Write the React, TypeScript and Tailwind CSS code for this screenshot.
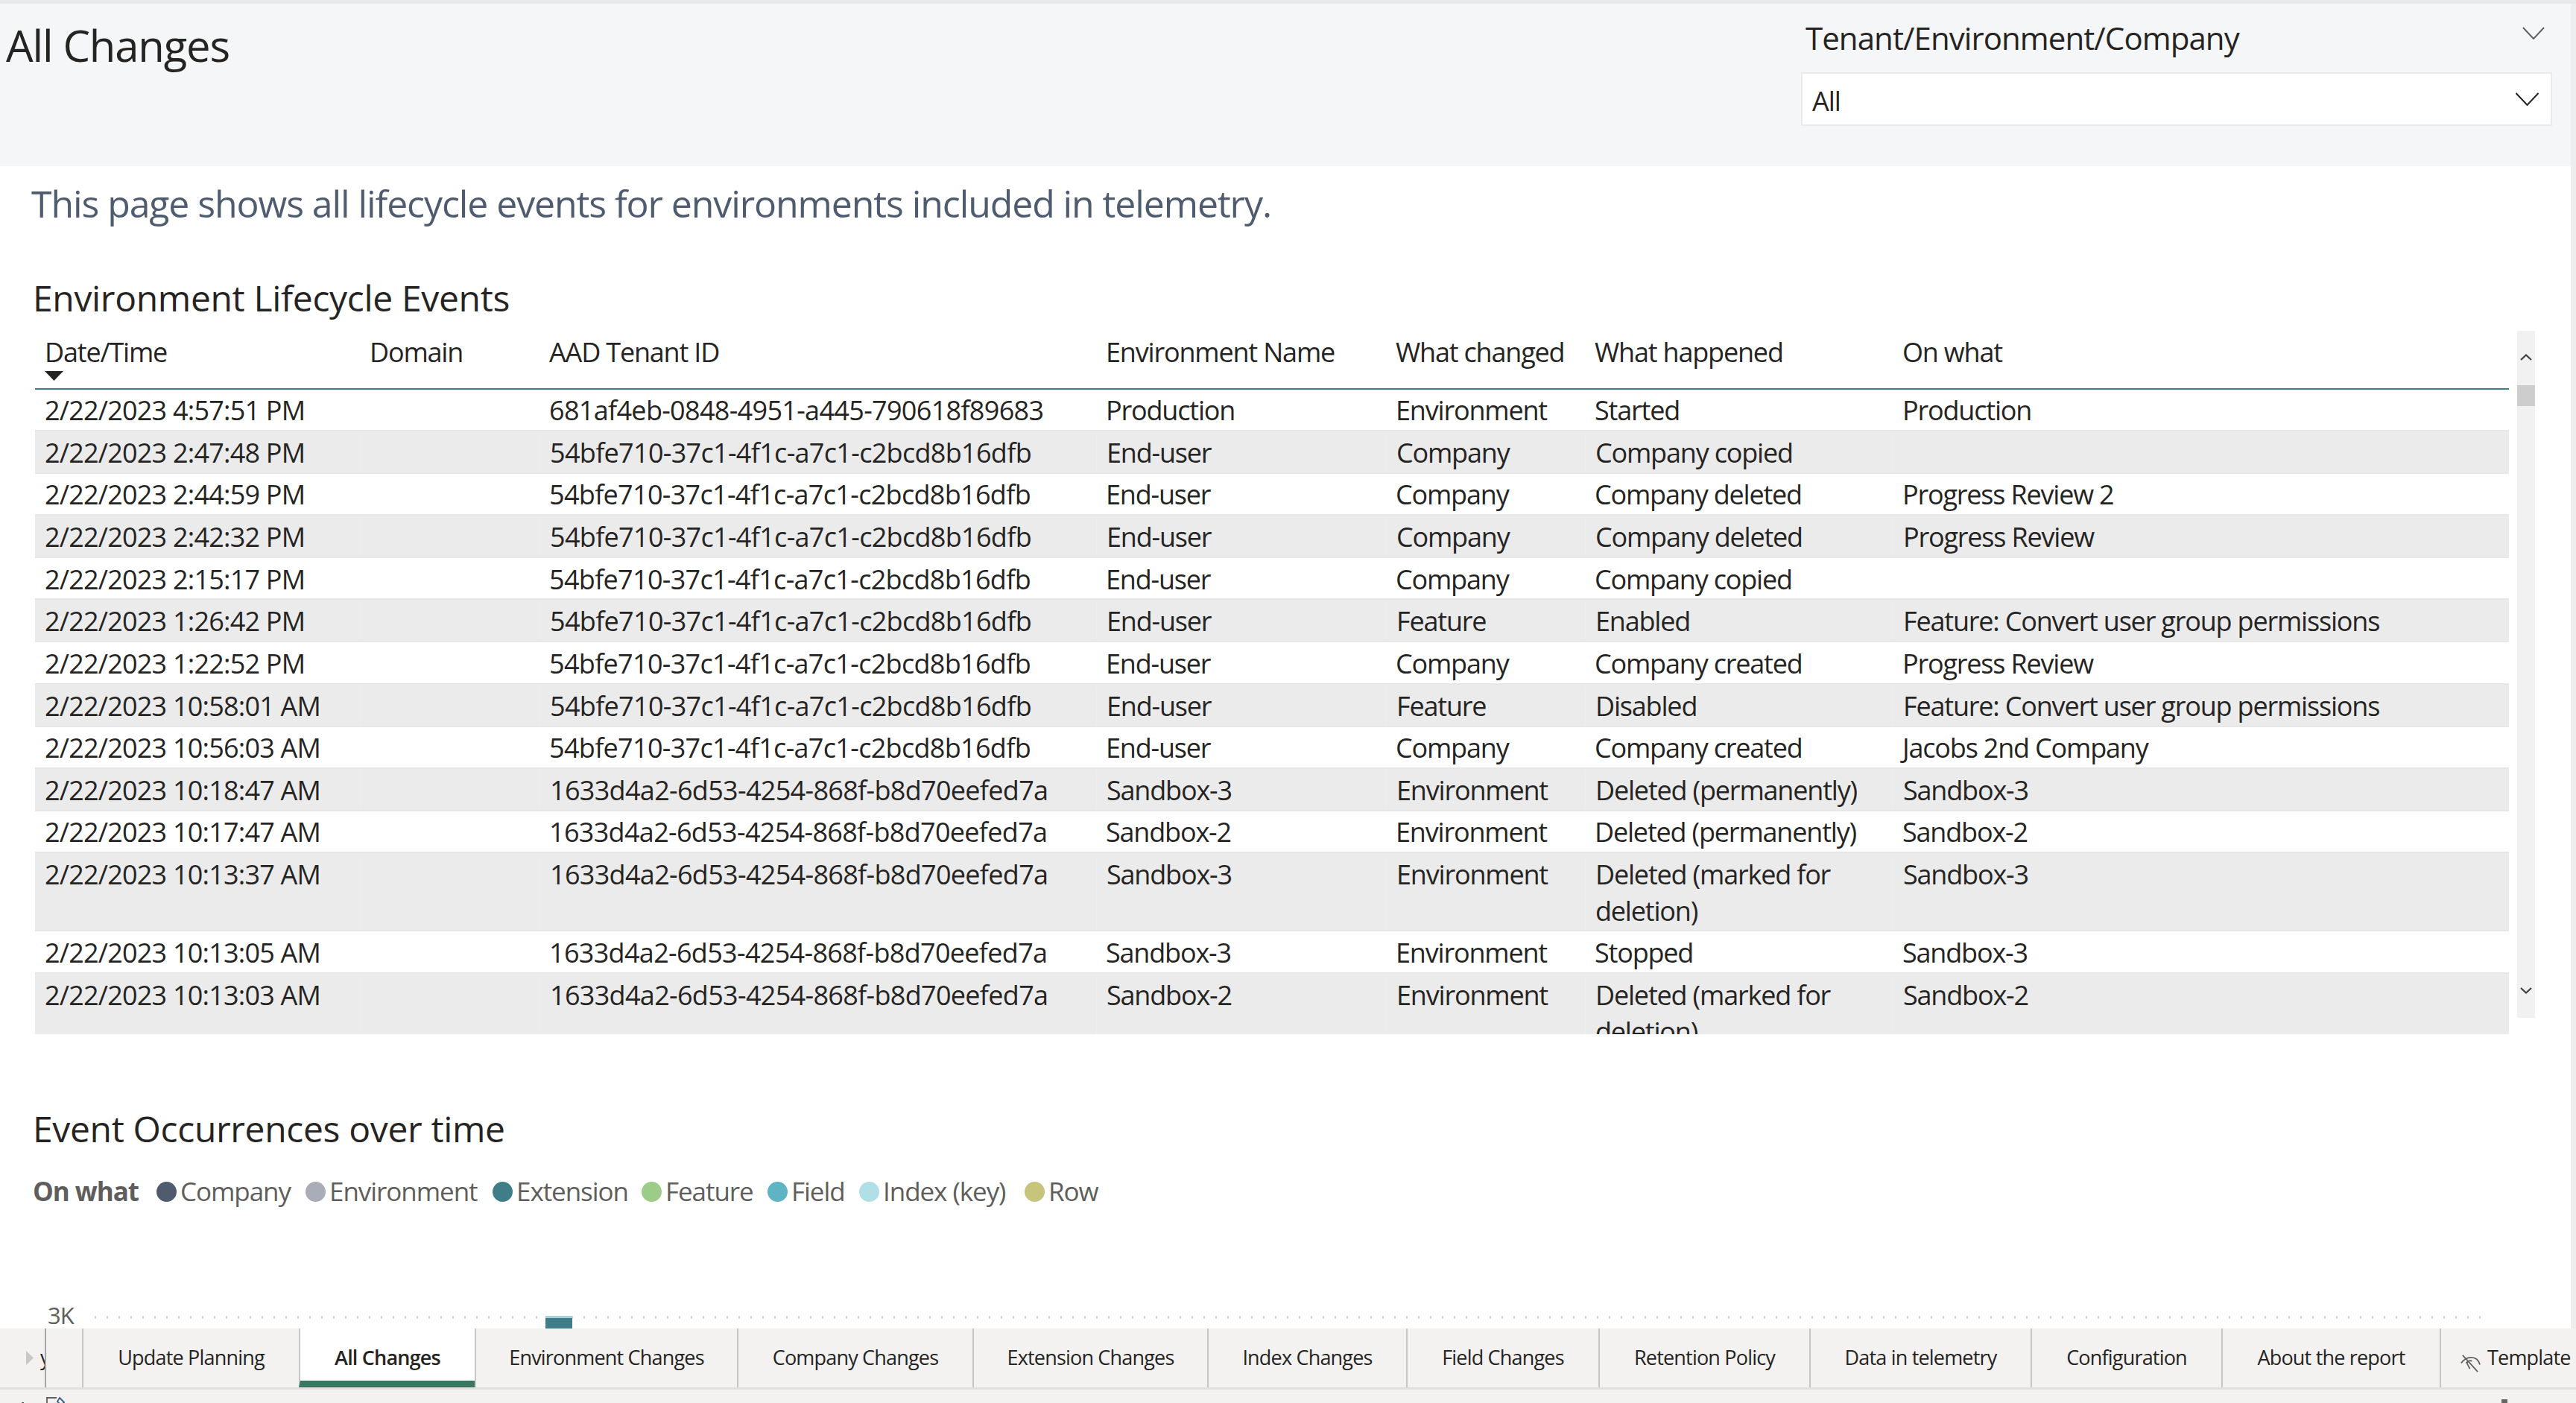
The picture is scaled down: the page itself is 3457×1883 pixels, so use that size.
import React from "react";

type Row = [string, string, string, string, string, string];

const A = "54bfe710-37c1-4f1c-a7c1-c2bcd8b16dfb";
const B = "1633d4a2-6d53-4254-868f-b8d70eefed7a";

const rows: Row[] = [
  ["2/22/2023 4:57:51 PM", "681af4eb-0848-4951-a445-790618f89683", "Production", "Environment", "Started", "Production"],
  ["2/22/2023 2:47:48 PM", A, "End-user", "Company", "Company copied", ""],
  ["2/22/2023 2:44:59 PM", A, "End-user", "Company", "Company deleted", "Progress Review 2"],
  ["2/22/2023 2:42:32 PM", A, "End-user", "Company", "Company deleted", "Progress Review"],
  ["2/22/2023 2:15:17 PM", A, "End-user", "Company", "Company copied", ""],
  ["2/22/2023 1:26:42 PM", A, "End-user", "Feature", "Enabled", "Feature: Convert user group permissions"],
  ["2/22/2023 1:22:52 PM", A, "End-user", "Company", "Company created", "Progress Review"],
  ["2/22/2023 10:58:01 AM", A, "End-user", "Feature", "Disabled", "Feature: Convert user group permissions"],
  ["2/22/2023 10:56:03 AM", A, "End-user", "Company", "Company created", "Jacobs 2nd Company"],
  ["2/22/2023 10:18:47 AM", B, "Sandbox-3", "Environment", "Deleted (permanently)", "Sandbox-3"],
  ["2/22/2023 10:17:47 AM", B, "Sandbox-2", "Environment", "Deleted (permanently)", "Sandbox-2"],
  ["2/22/2023 10:13:37 AM", B, "Sandbox-3", "Environment", "Deleted (marked for deletion)", "Sandbox-3"],
  ["2/22/2023 10:13:05 AM", B, "Sandbox-3", "Environment", "Stopped", "Sandbox-3"],
  ["2/22/2023 10:13:03 AM", B, "Sandbox-2", "Environment", "Deleted (marked for deletion)", "Sandbox-2"],
];

const legend = [
  { label: "Company", dot: "bg-[#505b6e]", w: "w-[200px]" },
  { label: "Environment", dot: "bg-[#a9adb8]", w: "w-[251px]" },
  { label: "Extension", dot: "bg-[#3f7d88]", w: "w-[200px]" },
  { label: "Feature", dot: "bg-[#9ccc87]", w: "w-[169px]" },
  { label: "Field", dot: "bg-[#5eb4c3]", w: "w-[123px]" },
  { label: "Index (key)", dot: "bg-[#b0e0e6]", w: "w-[222px]" },
  { label: "Row", dot: "bg-[#c7c47c]", w: "w-[110px]" },
];

const tabs = [
  { label: "Update Planning", w: "w-[291px]" },
  { label: "All Changes", w: "w-[236px]", active: true },
  { label: "Environment Changes", w: "w-[352px]" },
  { label: "Company Changes", w: "w-[316px]" },
  { label: "Extension Changes", w: "w-[315px]" },
  { label: "Index Changes", w: "w-[267px]" },
  { label: "Field Changes", w: "w-[258px]" },
  { label: "Retention Policy", w: "w-[283px]" },
  { label: "Data in telemetry", w: "w-[297px]" },
  { label: "Configuration", w: "w-[256px]" },
  { label: "About the report", w: "w-[293px]" },
];

const gridCols = "grid grid-cols-[436px_241px_747px_389px_267px_413px_827px]";
const cell = "pl-[13px] pr-[13px] leading-[49px]";
const digits = "tracking-[-0.022em]";
const hex = "tracking-[-0.019em]";

function Chevron({ className, color }: { className: string; color: string }) {
  return (
    <svg className={className} viewBox="0 0 32 18" fill="none">
      <path d="M1 1 L16 17 L31 1" stroke={color} strokeWidth="2" />
    </svg>
  );
}

export default function App() {
  return (
    <div className="w-[3457px] h-[1883px] overflow-hidden flex flex-col bg-[#eeeeee] font-['Open_Sans','Noto_Sans',sans-serif] text-[#252423]">
      <div className="h-[5px] shrink-0 bg-[#e9e9e9]" />
      <header className="h-[218px] shrink-0 mr-[7px] bg-[#f5f6f8] flex justify-between">
        <h1 className="pl-[8px] pt-[25px] text-[58px] leading-[62px] tracking-[-0.02em] font-normal">All Changes</h1>
        <div className="w-[1008px] mr-[25px] shrink-0">
          <div className="flex justify-between items-start h-[92px] pl-[6px] pr-[10px]">
            <span className="text-[42px] leading-[56px] pt-[18px] tracking-[-0.022em]">Tenant/Environment/Company</span>
            <Chevron className="w-[30px] h-[17px] mt-[31px]" color="#605e5c" />
          </div>
          <div className="h-[72px] bg-white border-2 border-[#eaeaea] flex items-center justify-between pl-[13px] pr-[14px]">
            <span className="text-[36px] pt-[5px] tracking-[-0.03em]">All</span>
            <Chevron className="w-[35px] h-[18px]" color="#252423" />
          </div>
        </div>
      </header>

      <main className="h-[1560px] shrink-0 mr-[7px] bg-white flex flex-col overflow-hidden">
        <p className="pl-[42px] h-[100px] text-[50px] leading-[100px] tracking-[-0.022em] text-[#4f5b6e]">
          This page shows all lifecycle events for environments included in telemetry.
        </p>
        <h2 className="pl-[44px] mt-[47px] h-[60px] text-[48px] leading-[60px] tracking-[-0.007em] font-normal">
          Environment Lifecycle Events
        </h2>

        <section className="mt-[14px] h-[944px] shrink-0 flex pl-[47px] gap-[11px]">
          <div className="w-[3320px] h-full overflow-hidden text-[36px] tracking-[-0.033em]">
            <div className={`${gridCols} h-[78.8px] border-b-[2px] border-[#3f7d88]`}>
              {["Date/Time", "Domain", "AAD Tenant ID", "Environment Name", "What changed", "What happened", "On what"].map((h) => (
                <div key={h} className="pl-[13px] pr-[13px] pt-[4px] leading-[49px]">
                  {h}
                  {h === "Date/Time" && (
                    <svg className="w-[25px] h-[13px] mt-[1px]" viewBox="0 0 25 13">
                      <path d="M0 0H25L12.5 13Z" fill="#252423" />
                    </svg>
                  )}
                </div>
              ))}
            </div>
            {rows.map((r, i) => {
              const gray = i % 2 === 1;
              const two = r[4].includes("marked");
              const rowCls = gray
                ? `bg-[#ebebeb] border-y-2 border-[#e7e7e7] pt-[4px] ${two ? "pb-[1.5px]" : "pb-[2px]"}`
                : "bg-white pt-[3.5px] pb-[1.7px]";
              const seam = gray ? "border-l border-[#eeeeee]" : "";
              return (
                <div key={i} className={`${gridCols} ${rowCls}`}>
                  <div className={`${cell} ${digits}`}>{r[0]}</div>
                  <div className={`${cell} ${seam}`} />
                  <div className={`${cell} ${seam} ${hex}`}>{r[1]}</div>
                  <div className={`${cell} ${seam}`}>{r[2]}</div>
                  <div className={`${cell} ${seam}`}>{r[3]}</div>
                  <div className={`${cell} ${seam}`}>{r[4]}</div>
                  <div className={`${cell} ${seam}`}>{r[5]}</div>
                </div>
              );
            })}
          </div>
          <div className="w-[24px] h-[922px] bg-[#f1f1f1] flex flex-col items-center">
            <div className="h-[73px] w-full shrink-0 flex items-center justify-center pb-[2px]">
              <svg className="w-[16px] h-[9px]" viewBox="0 0 16 9" fill="none">
                <path d="M1 8L8 1.5L15 8" stroke="#404040" strokeWidth="2.2" />
              </svg>
            </div>
            <div className="h-[28px] w-full shrink-0 bg-[#cdcdcd]" />
            <div className="flex-1" />
            <svg className="w-[16px] h-[9px] mb-[32px]" viewBox="0 0 16 9" fill="none">
              <path d="M1 1L8 7.5L15 1" stroke="#404040" strokeWidth="2.2" />
            </svg>
          </div>
        </section>

        <h2 className="pl-[44px] mt-[97px] h-[60px] text-[48px] leading-[60px] tracking-[-0.007em] font-normal">
          Event Occurrences over time
        </h2>

        <div className="mt-[29px] h-[50px] pl-[44px] flex items-center text-[35px] tracking-[-0.03em] text-[#605e5c]">
          <span className="w-[166px] font-bold">On what</span>
          {legend.map((l) => (
            <span key={l.label} className={`flex items-center ${l.w}`}>
              <span className={`w-[27px] h-[27px] rounded-full shrink-0 mr-[5px] ${l.dot}`} />
              <span className="whitespace-nowrap">{l.label}</span>
            </span>
          ))}
        </div>

        <div className="mt-auto h-[35px] flex pl-[64px]">
          <span className="w-[63px] text-[31px] leading-[34px] tracking-[-0.03em] text-[#605e5c]">3K</span>
          <svg className="mt-[18px]" width="3213" height="17" viewBox="0 0 3213 17">
            <line x1="0" y1="2" x2="3213" y2="2" stroke="#c8c8c8" strokeWidth="3" strokeDasharray="2 14" />
            <rect x="605" y="0" width="36" height="17" fill="#3f7d88" />
            <rect x="605" y="0" width="36" height="3" fill="#a5d3da" />
          </svg>
        </div>
      </main>

      <nav className="h-[79px] shrink-0 bg-[#f3f2f1] flex text-[27px] tracking-[-0.03em]">
        <div className="w-[60px] shrink-0 flex items-center overflow-hidden">
          <svg className="ml-[35px] w-[10px] h-[19px] shrink-0" viewBox="0 0 10 19">
            <path d="M0 0L10 9.5L0 19Z" fill="#c8c8c8" />
          </svg>
          <span className="ml-[9px] whitespace-nowrap shrink-0">y</span>
        </div>
        <div className="w-[50px] shrink-0 border-l-2 border-[#a6a6a6]" />
        {tabs.map((t) => (
          <div
            key={t.label}
            className={`${t.w} shrink-0 flex items-center justify-center border-l-2 border-[#c8c6c4] ${
              t.active ? "bg-white font-semibold border-b-[9px] border-b-[#3b7662] pt-[9px]" : ""
            }`}
          >
            {t.label}
          </div>
        ))}
        <div className="flex-1 border-l-2 border-[#c8c6c4] flex items-center pl-[26px]">
          <svg className="w-[27px] h-[27px] mt-[14px] mr-[9px] shrink-0" viewBox="0 0 28 28" fill="none" stroke="#605e5c" strokeWidth="1.8">
            <path d="M1 14C5 8 10 6 15 6C20 6 25 9 27 16" />
            <path d="M9 14C10 11 13 10 16 11" />
            <path d="M3 3L24 26" />
            <path d="M8 12L13 22" />
          </svg>
          <span>Template</span>
        </div>
      </nav>

      <footer className="h-[3px] shrink-0 bg-[#e1dfdd]" />
      <div className="h-[18px] shrink-0 overflow-hidden bg-[#f3f2f1] flex text-[26px] leading-[32px] tracking-[-0.02em] pl-[4px]">
        <span className="w-[58px] mt-[10px]">Edit</span>
        <svg className="mt-[10px] mr-[18px]" width="28" height="26" viewBox="0 0 28 26" fill="none" stroke="#605e5c" strokeWidth="1.8">
          <path d="M1 26V1H14" />
          <path d="M18 1L24 7L20 11L15 6Z" stroke="#3b5d8a" />
        </svg>
        <span className="w-[2177px] mt-[11px]">General</span>
        <span className="w-[1072px] mt-[11px] whitespace-nowrap">Connected live to the Power BI dataset: Premium capacity</span>
        <span className="w-[8px] h-[5px] mt-[13px] bg-[#666666]" />
      </div>
    </div>
  );
}
